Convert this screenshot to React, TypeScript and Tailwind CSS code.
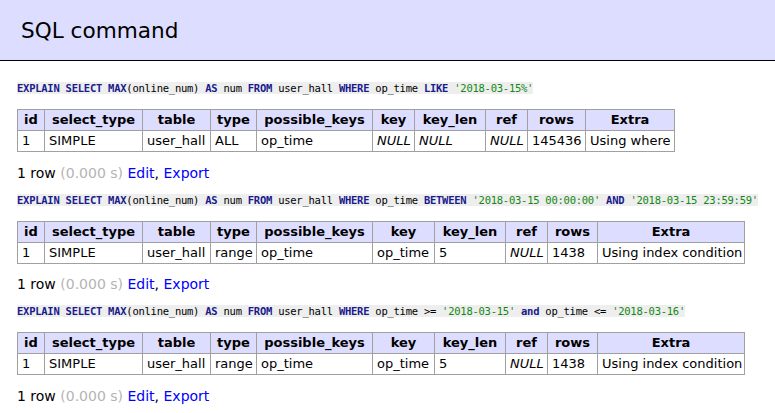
import React from "react";

type Tok = [string, "k" | "s" | "p"];

const K = (t: string): Tok => [t, "k"];
const S = (t: string): Tok => [t, "s"];
const P = (t: string): Tok => [t, "p"];

const prefix: Tok[] = [
  K("EXPLAIN"), P(" "), K("SELECT"), P(" "), K("MAX"), P("(online_num) "), K("AS"), P(" num "), K("FROM"), P(" user_hall "), K("WHERE"), P(" op_time "),
];

const lines: Tok[][] = [
  [...prefix, K("LIKE"), P(" "), S("'2018-03-15%'")],
  [...prefix, K("BETWEEN"), P(" "), S("'2018-03-15 00:00:00'"), P(" "), K("AND"), P(" "), S("'2018-03-15 23:59:59'")],
  [...prefix, P(">= "), S("'2018-03-15'"), P(" "), K("and"), P(" op_time <= "), S("'2018-03-16'")],
];

const headers = ["id", "select_type", "table", "type", "possible_keys", "key", "key_len", "ref", "rows", "Extra"];

type Cell = { v: string; i?: boolean };

const rows1: Cell[] = [
  { v: "1" }, { v: "SIMPLE" }, { v: "user_hall" }, { v: "ALL" }, { v: "op_time" }, { v: "NULL", i: true }, { v: "NULL", i: true }, { v: "NULL", i: true }, { v: "145436" }, { v: "Using where" },
];
const rows2: Cell[] = [
  { v: "1" }, { v: "SIMPLE" }, { v: "user_hall" }, { v: "range" }, { v: "op_time" }, { v: "op_time" }, { v: "5" }, { v: "NULL", i: true }, { v: "1438" }, { v: "Using index condition" },
];

function Code({ toks }: { toks: Tok[] }) {
  return (
    <div className="h-[12px] leading-[12px]">
      <span className="inline-block h-[12px] bg-[#eeeeee] font-['DejaVu_Sans_Mono',monospace] text-[10.5px] leading-[12px] tracking-[-0.25px] whitespace-pre text-black">
        {toks.map((t, i) =>
          t[1] === "k" ? (
            <span key={i} className="font-bold text-[#1a1a8c]">{t[0]}</span>
          ) : t[1] === "s" ? (
            <span key={i} className="text-[#118811]">{t[0]}</span>
          ) : (
            <span key={i}>{t[0]}</span>
          )
        )}
      </span>
    </div>
  );
}

function Grid({ wide, data }: { wide: boolean; data: Cell[] }) {
  const cols = wide
    ? "grid-cols-[27px_98px_68px_46px_116px_62px_71px_42px_50px_148px]"
    : "grid-cols-[27px_98px_68px_46px_116px_42px_71px_42px_58px_90px]";
  return (
    <div className={`mt-[15px] grid w-max text-[13px] ${cols}`}>
      {headers.map((h, i) => (
        <div
          key={h}
          className={`flex h-[21px] items-center justify-center border-t border-l border-[#a0a0a0] bg-[#ddddff] px-[4px] font-bold whitespace-nowrap ${i === headers.length - 1 ? "border-r" : ""}`}
        >
          {h}
        </div>
      ))}
      {data.map((c, i) => (
        <div
          key={i}
          className={`flex h-[22px] items-center border-t border-b border-l border-[#a0a0a0] bg-white px-[4px] whitespace-nowrap ${c.i ? "italic" : ""} ${i === data.length - 1 ? "border-r" : ""}`}
        >
          {c.v}
        </div>
      ))}
    </div>
  );
}

function Footer({ mt }: { mt: string }) {
  return (
    <div className={`${mt} h-[18px] text-[14px] leading-[18px] whitespace-nowrap`}>
      <span className="text-black">1 row </span>
      <span className="text-[#b4b4b4]">(0.000 s)</span>{" "}
      <span className="text-[#0000ff]">Edit</span>
      <span className="text-black">, </span>
      <span className="text-[#0000ff]">Export</span>
    </div>
  );
}

export default function App() {
  return (
    <div className="h-[413px] w-[775px] overflow-hidden bg-white font-['DejaVu_Sans',sans-serif] text-[13px] text-black">
      <div className="h-[61px] border-b border-black bg-[#ddddff] pl-[21px] pt-[17px] text-[21.6px] leading-[27px]">
        SQL command
      </div>
      <div className="pl-[17px] pt-[21px]">
        <Code toks={lines[0]} />
        <Grid wide={false} data={rows1} />
        <Footer mt="mt-[12px]" />
        <div className="mt-[12px]">
          <Code toks={lines[1]} />
        </div>
        <Grid wide={true} data={rows2} />
        <Footer mt="mt-[11px]" />
        <div className="mt-[12px]">
          <Code toks={lines[2]} />
        </div>
        <Grid wide={true} data={rows2} />
        <Footer mt="mt-[12px]" />
      </div>
    </div>
  );
}
